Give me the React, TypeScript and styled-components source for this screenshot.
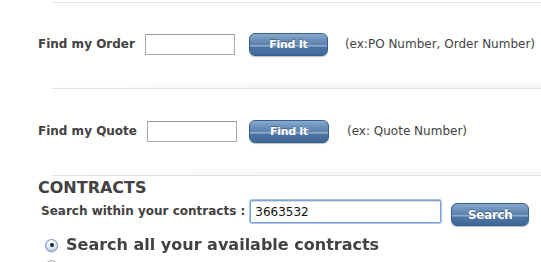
import React from "react";
import styled, { createGlobalStyle } from "styled-components";

const GlobalStyle = createGlobalStyle`
  html, body {
    margin: 0;
    padding: 0;
    background: #fff;
    overflow: hidden;
  }
  body {
    font-family: "DejaVu Sans", Verdana, sans-serif;
    color: #424242;
  }
`;

const Page = styled.div`
  width: 541px;
  height: 262px;
  overflow: hidden;
`;

const Divider = styled.div`
  margin-left: 52px;
  height: 8px;
  border-bottom: 1px solid #e0e0e0;
  background: linear-gradient(
    to right,
    rgba(255, 255, 255, 1) 0%,
    rgba(255, 255, 255, 0) 45%
  ),
  linear-gradient(to bottom, rgba(0, 0, 0, 0) 0%, rgba(0, 0, 0, 0.045) 100%);
`;

const TopDivider = styled(Divider)`
  height: 1px;
  margin-top: 1px;
  background: none;
  border-bottom: 1px solid #e6e6e6;
`;

const FinderRow = styled.div<{ $height: number; $shift: number }>`
  display: flex;
  align-items: center;
  height: ${(p) => p.$height}px;
  padding-left: 38px;
  padding-bottom: ${(p) => p.$shift}px;
  box-sizing: border-box;
`;

const Label = styled.label`
  font-weight: bold;
  font-size: 12px;
  color: #424242;
  margin-right: 10px;
  white-space: nowrap;
`;

const TextBox = styled.input`
  width: 90px;
  height: 21px;
  box-sizing: border-box;
  border: 1px solid #a9a9a9;
  border-top-color: #9a9a9a;
  background: #fff;
  padding: 2px 4px;
  font-family: "DejaVu Sans", sans-serif;
  font-size: 12px;
  outline: none;
`;

const BlueButton = styled.button<{ $width: number; $gap: number }>`
  width: ${(p) => p.$width}px;
  height: 23px;
  margin-left: ${(p) => p.$gap}px;
  box-sizing: border-box;
  border: 1px solid #35608f;
  border-radius: 6px;
  background: linear-gradient(
    to bottom,
    #8aa9cc 0%,
    #6a8fba 30%,
    #5a80ad 52%,
    #a9c0dc 56%,
    #4d75a3 62%,
    #3e6897 100%
  );
  box-shadow: 0 1px 1px rgba(0, 0, 0, 0.25);
  color: #fff;
  font-family: "DejaVu Sans", sans-serif;
  font-weight: bold;
  font-size: 11px;
  letter-spacing: -0.3px;
  text-shadow: 0 -1px 0 rgba(0, 0, 0, 0.3);
  padding: 0;
  cursor: pointer;
`;

const Hint = styled.span<{ $gap: number }>`
  margin-left: ${(p) => p.$gap}px;
  font-size: 12px;
  color: #424242;
  white-space: nowrap;
`;

const Contracts = styled.section`
  padding-left: 38px;
`;

const Heading = styled.h2`
  margin: 2px 0 0;
  font-size: 16px;
  line-height: 19px;
  font-weight: bold;
  color: #424242;
`;

const SearchRow = styled.div`
  display: flex;
  align-items: flex-start;
  margin-top: 3px;
  padding-left: 3px;
`;

const SearchLabel = styled(Label)`
  margin: 4px 5px 0 0;
`;

const FocusBox = styled.input`
  width: 191px;
  height: 23px;
  box-sizing: border-box;
  border: 1px solid #7fa5d6;
  box-shadow: 0 0 0 1px #a9c6ea, inset 0 1px 1px rgba(0, 0, 0, 0.15);
  border-radius: 2px;
  padding: 2px 4px;
  font-family: "DejaVu Sans", sans-serif;
  font-size: 12px;
  color: #111;
  outline: none;
  caret-color: #000;
`;

const SearchButton = styled(BlueButton)`
  margin-top: 3px;
  font-size: 12px;
`;

const Options = styled.div`
  margin-top: 9px;
  padding-left: 7px;
  display: flex;
  flex-direction: column;
  gap: 1px;
`;

const Option = styled.label`
  display: flex;
  align-items: center;
  gap: 8px;
  height: 20px;
  font-weight: bold;
  font-size: 16px;
  line-height: 20px;
  color: #424242;
`;

const Radio = styled.span<{ $checked?: boolean }>`
  position: relative;
  width: 13px;
  height: 13px;
  box-sizing: border-box;
  border-radius: 50%;
  border: 1px solid #6f8db3;
  background: radial-gradient(circle at 50% 25%, #ffffff 0%, #dce8f7 55%, #9fbde2 100%);
  box-shadow: 0 1px 1px rgba(0, 0, 0, 0.12);
  flex: none;

  &::after {
    content: "";
    display: ${(p) => (p.$checked ? "block" : "none")};
    position: absolute;
    left: 3.5px;
    top: 3.5px;
    width: 4px;
    height: 4px;
    border-radius: 50%;
    background: #18263a;
  }
`;

const UncheckedRadio = styled(Radio)`
  border-color: #a3a3a3;
  background: radial-gradient(circle at 50% 25%, #ffffff 0%, #f0f0f0 60%, #d8d8d8 100%);
`;

export default function App() {
  return (
    <Page>
      <GlobalStyle />
      <TopDivider />
      <FinderRow $height={85} $shift={3}>
        <Label>Find my Order</Label>
        <TextBox />
        <BlueButton $width={79} $gap={14}>
          Find It
        </BlueButton>
        <Hint $gap={17}>(ex:PO Number, Order Number)</Hint>
      </FinderRow>
      <Divider style={{ marginTop: -8 }} />
      <FinderRow $height={86} $shift={2}>
        <Label>Find my Quote</Label>
        <TextBox />
        <BlueButton $width={80} $gap={12}>
          Find It
        </BlueButton>
        <Hint $gap={18}>(ex: Quote Number)</Hint>
      </FinderRow>
      <Divider style={{ marginTop: -8 }} />
      <Contracts>
        <Heading>CONTRACTS</Heading>
        <SearchRow>
          <SearchLabel>Search within your contracts :</SearchLabel>
          <FocusBox defaultValue="3663532" autoFocus />
          <SearchButton $width={78} $gap={10}>
            Search
          </SearchButton>
        </SearchRow>
        <Options>
          <Option>
            <Radio $checked />
            Search all your available contracts
          </Option>
          <Option>
            <UncheckedRadio />
          </Option>
        </Options>
      </Contracts>
    </Page>
  );
}
